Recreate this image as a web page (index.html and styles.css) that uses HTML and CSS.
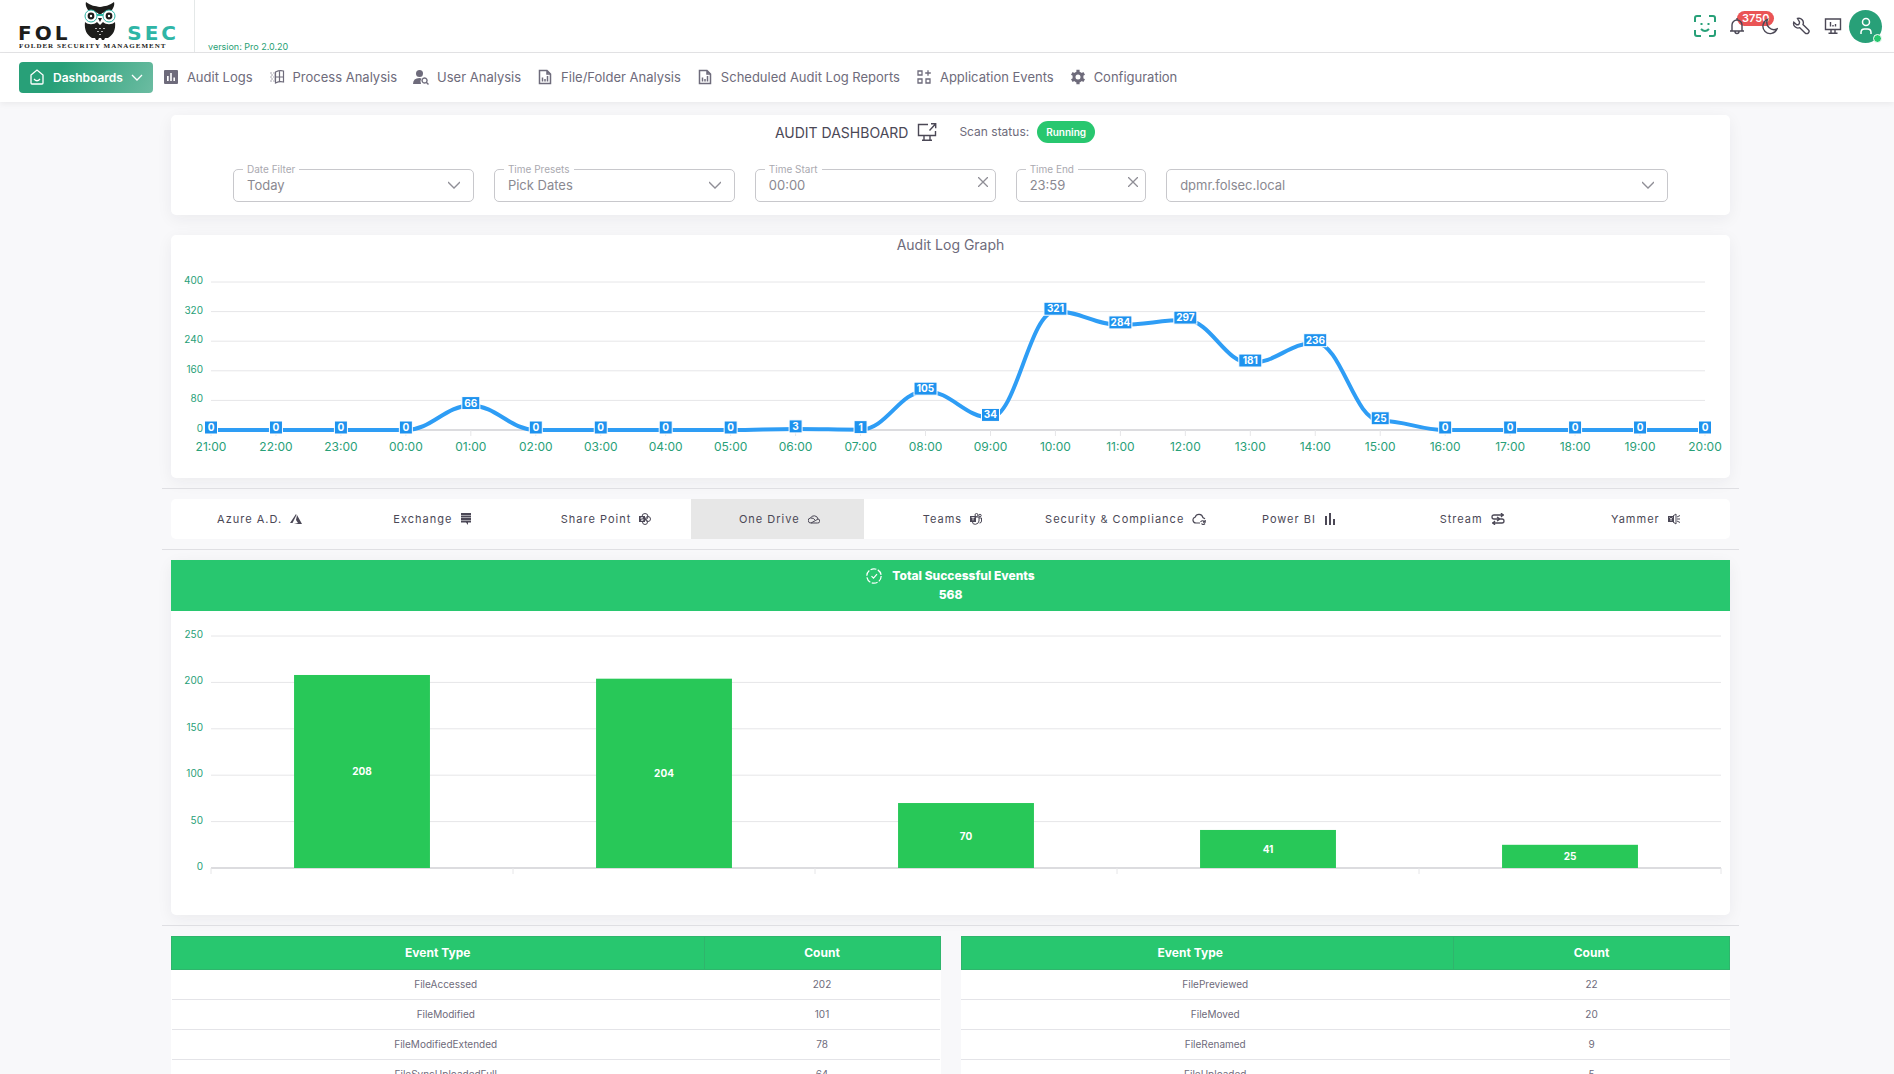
FILE: index.html
```
<!DOCTYPE html>
<html lang="en">

<head>
    <meta charset="UTF-8">
    <meta name="viewport" content="width=device-width, initial-scale=1.0">
    <title>Audit Dashboard</title>
    <link rel="stylesheet" href="styles.css">
</head>

<body>
    <header class="topbar">
        <a href="#" class="brand" aria-label="Folsec">
            <svg width="160" height="50" viewBox="0 0 160 50">
                <text class="logo-word" x="-1" y="40">FOL</text>
                <text class="logo-word logo-teal" x="160" y="40" text-anchor="end">SEC</text>
                <text class="logo-tag" x="0" y="48">FOLDER SECURITY MANAGEMENT</text>
                <path d="M67 2c5 4 9 4 14 5 5-1 9-1 14-5 1 3-1 7-3 9-4 0-8 1-11 4-3-3-7-4-11-4-2-2-4-6-3-9z" fill="#1d1d1b"/>
                <path d="M66 22c3 3 9 3 12 0l3 3 3-3c3 3 9 3 12 0 1 8-2 13-7 16h-3l-1 2h-2l-1-2h-2l-1 2h-2l-1-2h-3c-5-3-8-8-7-16z" fill="#1d1d1b"/>
                <circle cx="72" cy="16" r="6" fill="#fff" stroke="#2fb5a6"/>
                <circle cx="90" cy="16" r="6" fill="#fff" stroke="#2fb5a6"/>
                <path d="M78 15h6" stroke="#2fb5a6" stroke-width="2"/>
                <path d="M79 18h4l-2 4z" fill="#1d1d1b"/>
                <circle cx="72" cy="16" r="3.4" fill="#1d1d1b"/>
                <circle cx="90" cy="16" r="3.4" fill="#1d1d1b"/>
                <circle cx="72" cy="16" r="1.2" fill="#fff"/>
                <circle cx="90" cy="16" r="1.2" fill="#fff"/>
                <path d="M76 28l1 1 1-1M80 28l1 1 1-1M84 28l1 1 1-1M78 31l1 1 1-1M82 31l1 1 1-1M80 34l1 1 1-1" fill="none" stroke="#fff" stroke-width=".7"/>
            </svg>
        </a>
        <span class="version">version: Pro 2.0.20</span>
        <div class="actions">
            <button class="action action-face" aria-label="Account status">
                <svg width="22" height="22" viewBox="0 0 22 22" fill="none" stroke="currentColor" stroke-width="2">
                    <path d="M1 7V3q0-2 2-2h4M15 1h4q2 0 2 2v4M21 15v4q0 2-2 2h-4M7 21H3q-2 0-2-2v-4M7 14q4 4 8 0"/>
                    <path d="M6.500 9h2M13.500 9h2"/>
                </svg>
            </button>
            <button class="action" aria-label="Notifications">
                <svg class="icon-line" width="16" height="18" viewBox="0 0 16 18">
                    <path d="M1 14h14M3 14V8a5 5 0 0 1 10 0v6M6 14.500q0 2 2 2t2-2M8 3V1"/>
                </svg>
                <span class="badge">3750</span>
            </button>
            <button class="action" aria-label="Dark mode">
                <svg class="icon-line" width="17" height="17" viewBox="0 0 17 17">
                    <path d="M6.500 1.500A7.300 7.300 0 1 0 16 11 7.200 7.200 0 0 1 6.500 1.500z"/>
                </svg>
            </button>
            <button class="action" aria-label="Tools">
                <svg class="icon-line" width="18" height="18" viewBox="0 0 18 18">
                    <path d="M5.500 1.500a4.500 4.500 0 0 1 5.500 6l5.300 5.200a2.200 2.200 0 0 1-3.200 3.300L7.800 10.700a4.500 4.500 0 0 1-6-5.500l2.900 2.600q3 .2 2.800-2.900z"/>
                </svg>
            </button>
            <button class="action" aria-label="Monitor">
                <svg class="icon-line" width="18" height="18" viewBox="0 0 18 18">
                    <path d="M1.500 2h15v10.500h-15zM7 13v3M11 13v3M4.500 16.200h9M6.500 5v4.500M9 8v1.500M11.500 7v2.500"/>
                </svg>
            </button>
            <button class="avatar" aria-label="Profile">
                <svg width="16" height="18" viewBox="0 0 16 18" fill="none" stroke="#fff" stroke-width="1.5">
                    <circle cx="8" cy="5" r="3.500"/>
                    <path d="M3 17v-1.500q0-3.500 3.500-3.500h3q3.500 0 3.500 3.500V17"/>
                </svg>
                <span class="online"></span>
            </button>
        </div>
    </header>

    <nav class="menu">
        <a href="#" class="menu-item active">
            <svg width="16" height="16" viewBox="0 0 16 16" fill="none" stroke="currentColor" stroke-width="1.300">
                <path d="M2 6l6-5 6 5v8q0 1-1 1H3q-1 0-1-1zM5 10q3 3.500 6 0"/>
            </svg>
            Dashboards
            <svg width="12" height="12" viewBox="0 0 12 12" fill="none" stroke="currentColor" stroke-width="1.300">
                <path d="M1 4l5 5 5-5"/>
            </svg>
        </a>
        <a href="#" class="menu-item">
            <svg width="16" height="16" viewBox="0 0 16 16" fill="currentColor">
                <path fill-rule="evenodd" d="M2 1h12q1 0 1 1v12q0 1-1 1H2q-1 0-1-1V2q0-1 1-1zM4 7v5h1.700V7zM7.200 4v8h1.600V4zM10.400 8.500V12H12V8.500z"/>
            </svg>
            Audit Logs
        </a>
        <a href="#" class="menu-item">
            <svg width="16" height="16" viewBox="0 0 16 16" fill="none" stroke="currentColor" stroke-width="1.200">
                <path d="M6.500 3q4-2 8-1v11q-4-1-8 1zM10.500 2v11M6.500 8h8"/>
                <path d="M1 4h5M2 6h4M1 8h5M2 10h4M1 12h5" stroke-width="1" stroke-opacity=".6" stroke-dasharray="2 1"/>
            </svg>
            Process Analysis
        </a>
        <a href="#" class="menu-item">
            <svg width="16" height="16" viewBox="0 0 16 16" fill="currentColor">
                <circle cx="6.500" cy="4.500" r="3.500"/>
                <path d="M0 15q0-6 6.500-6l2 .4q-2 2.600-.5 5.600z"/>
                <path d="M11.500 9a2.500 2.500 0 1 0 .1 0zM13.300 13.300l2.200 2.200" fill="none" stroke="currentColor" stroke-width="1.400"/>
            </svg>
            User Analysis
        </a>
        <a href="#" class="menu-item">
            <svg width="16" height="16" viewBox="0 0 16 16" fill="none" stroke="currentColor" stroke-width="1.500">
                <path d="M3 1.500h7l3.500 3.500v9.500h-11v-13zM10 1.500V5h3.500M5.500 8.500v4M8 10v2.500M10.500 7v5.500"/>
            </svg>
            File/Folder Analysis
        </a>
        <a href="#" class="menu-item">
            <svg width="16" height="16" viewBox="0 0 16 16" fill="none" stroke="currentColor" stroke-width="1.500">
                <path d="M3 1.500h7l3.500 3.500v9.500h-11v-13zM10 1.500V5h3.500M5.500 8.500v4M8 10v2.500M10.500 7v5.500"/>
            </svg>
            Scheduled Audit Log Reports
        </a>
        <a href="#" class="menu-item">
            <svg width="16" height="16" viewBox="0 0 16 16" fill="none" stroke="currentColor" stroke-width="1.300">
                <path d="M2 2h4v4H2zM2 10h4v4H2zM10 10h4v4h-4zM12 1.200v5.600M9.200 4h5.600"/>
            </svg>
            Application Events
        </a>
        <a href="#" class="menu-item">
            <svg width="16" height="16" viewBox="0 0 16 16">
                <circle cx="8" cy="8" r="4" fill="none" stroke="currentColor" stroke-width="3"/>
                <path d="M8 .8v3M8 12.200v3M1.800 4.400l2.600 1.500M11.600 10.100l2.600 1.500M1.800 11.600l2.600-1.500M11.600 5.900l2.600-1.500" stroke="currentColor" stroke-width="3.200"/>
            </svg>
            Configuration
        </a>
    </nav>

    <main class="content">
        <section class="card filters">
            <div class="title-row">
                <h1>AUDIT DASHBOARD</h1>
                <svg class="icon-line" width="20" height="20" viewBox="0 0 20 20">
                    <path d="M11 2.500H1.500v11h17V9M7 14v4M13 14v4M5 18.200h10M12.500 8.500L18.500 2M14 1.700h4.700v4.600"/>
                </svg>
                <span class="scan">Scan status:</span>
                <span class="status">Running</span>
            </div>
            <form class="filter-row">
                <div class="field">
                    <label for="date-filter">Date Filter</label>
                    <select id="date-filter">
                        <option>Today</option>
                    </select>
                    <svg class="arrow" width="12" height="12" viewBox="0 0 12 12"><path d="M0 3l6 6 6-6"/></svg>
                </div>
                <div class="field">
                    <label for="time-presets">Time Presets</label>
                    <select id="time-presets">
                        <option>Pick Dates</option>
                    </select>
                    <svg class="arrow" width="12" height="12" viewBox="0 0 12 12"><path d="M0 3l6 6 6-6"/></svg>
                </div>
                <div class="field">
                    <label for="time-start">Time Start</label>
                    <input type="text" id="time-start" value="00:00">
                    <button type="button" class="clear" aria-label="Clear start">
                        <svg width="10" height="10" viewBox="0 0 10 10"><path d="M0 0l10 10M10 0L0 10"/></svg>
                    </button>
                </div>
                <div class="field">
                    <label for="time-end">Time End</label>
                    <input type="text" id="time-end" value="23:59">
                    <button type="button" class="clear" aria-label="Clear end">
                        <svg width="10" height="10" viewBox="0 0 10 10"><path d="M0 0l10 10M10 0L0 10"/></svg>
                    </button>
                </div>
                <div class="field">
                    <select id="server" aria-label="Server">
                        <option>dpmr.folsec.local</option>
                    </select>
                    <svg class="arrow" width="12" height="12" viewBox="0 0 12 12"><path d="M0 3l6 6 6-6"/></svg>
                </div>
            </form>
        </section>

        <section class="card">
            <h2>Audit Log Graph</h2>
            <svg class="chart" id="line-chart" viewBox="0 0 1559 218"></svg>
        </section>

        <hr>

        <div class="tabs">
            <button class="tab">Azure A.D.
                <svg width="12" height="12" viewBox="0 0 12 12" fill="currentColor"><path d="M6 1L0 10h2.500L6.500 2zM7 2l5 9H4l4-1-2-3z"/></svg>
            </button>
            <button class="tab">Exchange
                <svg width="12" height="12" viewBox="0 0 12 12" fill="currentColor"><path d="M1 0h10v2H1zM1 2.500h10v2H1zM1 5h10v2H1zM1 7.500h10v2H8V12L6 9.500H1z"/></svg>
            </button>
            <button class="tab">Share Point
                <svg width="12" height="12" viewBox="0 0 12 12" fill="none" stroke="currentColor"><circle cx="6" cy="3.500" r="3"/><circle cx="9" cy="6" r="2.500"/><circle cx="6" cy="9" r="2.500"/><path d="M0 3h6v6H0z" fill="currentColor" stroke="none"/><path d="M4 4.500H2v1.500h2v1.500H2" stroke="#fff" stroke-width=".7"/></svg>
            </button>
            <button class="tab selected">One Drive
                <svg width="12" height="12" viewBox="0 0 12 12" fill="none" stroke="currentColor"><path d="M3 10h6.500a2 2 0 0 0 .5-4A4 4 0 0 0 2.500 5 2.500 2.500 0 0 0 3 10zM2.500 5q3-.5 5 2.500L10 6M3 10l4.500-2.500"/></svg>
            </button>
            <button class="tab">Teams
                <svg width="12" height="12" viewBox="0 0 12 12" fill="none" stroke="currentColor"><circle cx="6.500" cy="2" r="1.500"/><circle cx="10" cy="2.500" r="1.200"/><path d="M6 4h3v4q-.5 3-3.500 3.300T2.500 9M9 5h2.500v3q0 2-2 2"/><path d="M0 3h6v6H0z" fill="currentColor" stroke="none"/><path d="M1.500 4.500h3M3 4.500v3" stroke="#fff" stroke-width=".8"/></svg>
            </button>
            <button class="tab">Security &amp; Compliance
                <svg width="14" height="12" viewBox="0 0 14 12" fill="none" stroke="currentColor" stroke-width="1.200"><path d="M8 10H4a3 3 0 0 1-.8-5.900 4 4 0 0 1 7.700.5q1.400.4 2 1.400"/><path d="M8.500 9q2-2.500 4.500 0M13.200 7v2.200H11M13 10.500q-2 2-3.500 0"/></svg>
            </button>
            <button class="tab">Power BI
                <svg width="12" height="12" viewBox="0 0 12 12" fill="currentColor"><path d="M1 3h2v9H1zM5 0h2v12H5zM9 6h2v6H9z"/></svg>
            </button>
            <button class="tab">Stream
                <svg width="14" height="12" viewBox="0 0 14 12" fill="none" stroke="currentColor" stroke-width="1.300"><path d="M13 2H3Q1 2 1 4t2 2h8q2 0 2 2t-2 2H1M10 0l2 2-2 2M4 8l-2 2 2 2M6 4l3 2-3 2"/></svg>
            </button>
            <button class="tab">Yammer
                <svg width="12" height="12" viewBox="0 0 12 12" fill="none" stroke="currentColor"><path d="M5 3l3-2v10L5 9M9 4l3-1.500M9 6h3M9 8l3 1.500"/><path d="M0 3h6v6H0z" fill="currentColor" stroke="none"/><path d="M1.500 4.500L3 6l1.500-1.500M3 6v2" stroke="#fff" stroke-width=".8"/></svg>
            </button>
        </div>

        <hr>

        <section class="card">
            <div class="total">
                <div class="total-title">
                    <svg width="16" height="16" viewBox="0 0 16 16" fill="none" stroke="currentColor" stroke-width="1.200">
                        <circle cx="8" cy="8" r="7.200" stroke-dasharray="6 1.540"/>
                        <path d="M5.500 8.200l2 2 3.500-4"/>
                    </svg>
                    Total Successful Events
                </div>
                <div>568</div>
            </div>
            <svg class="chart" id="bar-chart" viewBox="0 0 1559 304"></svg>
        </section>

        <hr>

        <div class="tables">
            <table class="events">
                <thead>
                    <tr><th>Event Type</th><th class="count">Count</th></tr>
                </thead>
                <tbody>
                    <tr><td>FileAccessed</td><td>202</td></tr>
                    <tr><td>FileModified</td><td>101</td></tr>
                    <tr><td>FileModifiedExtended</td><td>78</td></tr>
                    <tr><td>FileSyncUploadedFull</td><td>64</td></tr>
                </tbody>
            </table>
            <table class="events">
                <thead>
                    <tr><th class="type-wide">Event Type</th><th class="count wide">Count</th></tr>
                </thead>
                <tbody>
                    <tr><td>FilePreviewed</td><td>22</td></tr>
                    <tr><td>FileMoved</td><td>20</td></tr>
                    <tr><td>FileRenamed</td><td>9</td></tr>
                    <tr><td>FileUploaded</td><td>5</td></tr>
                </tbody>
            </table>
        </div>
    </main>

    <script>
        function add(svg, tag, attrs, text) {
            const el = document.createElementNS('http://www.w3.org/2000/svg', tag);
            for (const name in attrs) {
                el.setAttribute(name, attrs[name]);
            }
            if (text !== undefined) {
                el.textContent = text;
            }
            svg.appendChild(el);
            return el;
        }

        // horizontal lines with their values on the left
        function drawGrid(svg, left, right, top, bottom, max, step) {
            for (let v = 0; v <= max; v += step) {
                const y = bottom - (bottom - top) * v / max;
                add(svg, 'line', { class: v === 0 ? 'axis' : 'grid', x1: left, x2: right, y1: y, y2: y });
                add(svg, 'text', { class: 'y-label', x: left - 8, y: y + 2 }, v);
            }
        }

        function drawLineChart() {
            const svg = document.getElementById('line-chart');
            const values = [0, 0, 0, 0, 66, 0, 0, 0, 0, 3, 1, 105, 34, 321, 284, 297, 181, 236, 25, 0, 0, 0, 0, 0];
            const left = 40, right = 1534, top = 22, bottom = 170;
            const dx = (right - left) / (values.length - 1);

            drawGrid(svg, left, right, top, bottom, 400, 80);

            const points = values.map((v, i) => ({ x: left + dx * i, y: bottom - (bottom - top) * v / 400 }));
            let d = `M${points[0].x} ${points[0].y}`;
            points.forEach((p, i) => {
                add(svg, 'line', { class: 'grid', x1: p.x, x2: p.x, y1: bottom, y2: bottom + 6 });
                const hour = String((21 + i) % 24).padStart(2, '0');
                add(svg, 'text', { class: 'x-label', x: p.x, y: bottom + 21 }, hour + ':00');
                if (i > 0) {
                    const prev = points[i - 1];
                    const c = dx * 0.4;
                    d += ` C${prev.x + c} ${prev.y} ${p.x - c} ${p.y} ${p.x} ${p.y}`;
                }
            });
            add(svg, 'path', { class: 'series', d: d });

            points.forEach((p, i) => {
                const w = 8 + String(values[i]).length * 5;
                add(svg, 'rect', { class: 'tag', x: p.x - w / 2, y: p.y - 9, width: w, height: 13 });
                add(svg, 'text', { class: 'value', x: p.x, y: p.y + 1 }, values[i]);
            });
        }

        function drawBarChart() {
            const svg = document.getElementById('bar-chart');
            const values = [208, 204, 70, 41, 25];
            const left = 40, right = 1550, top = 25, bottom = 257;
            const dx = (right - left) / values.length;

            drawGrid(svg, left, right, top, bottom, 250, 50);

            for (let i = 0; i <= values.length; i++) {
                add(svg, 'line', { class: 'grid', x1: left + dx * i, x2: left + dx * i, y1: bottom, y2: bottom + 6 });
            }

            values.forEach((v, i) => {
                const h = (bottom - top) * v / 250;
                const w = dx * 0.45;
                const mid = left + dx * (i + 0.5);
                add(svg, 'rect', { class: 'bar', x: mid - w / 2, y: bottom - h, width: w, height: h });
                add(svg, 'text', { class: 'value', x: mid, y: bottom - h / 2 + 4 }, v);
            });
        }

        drawLineChart();
        drawBarChart();
    </script>
</body>

</html>
```
FILE: styles.css
```
* {
    box-sizing: border-box;
}

body {
    margin: 0;
    font-family: Inter, "Open Sans", sans-serif;
    font-size: 13px;
    color: #6e6b7b;
    background-color: #f8f8fa;
}

button {
    font-family: inherit;
    border: none;
    background: none;
    padding: 0;
    cursor: pointer;
}

svg {
    flex-shrink: 0;
}

.icon-line {
    fill: none;
    stroke: #4b4856;
    stroke-width: 1.4;
}

/* top bar */
.topbar {
    display: flex;
    height: 53px;
    padding: 0 12px 0 19px;
    background-color: #fff;
    border-bottom: 1px solid #e4e4e6;
}

.brand {
    padding-right: 15px;
    border-right: 1px solid #e4e8e8;
}

.brand svg {
    display: block;
}

.logo-word {
    font-family: "DejaVu Sans", sans-serif;
    font-size: 20px;
    font-weight: bold;
    letter-spacing: 3px;
    fill: #1d1d1b;
}

.logo-teal {
    fill: #2fb5a6;
}

.logo-tag {
    font-family: "Liberation Serif", serif;
    font-size: 7px;
    font-weight: bold;
    letter-spacing: 1px;
    fill: #1d1d1b;
}

.version {
    align-self: flex-end;
    margin-left: 13px;
    font-size: 9px;
    line-height: 10px;
    color: #28a074;
}

.actions {
    display: flex;
    align-items: center;
    margin-left: auto;
}

.action {
    position: relative;
    display: flex;
    align-items: center;
    justify-content: center;
    width: 32px;
    height: 32px;
}

.action svg {
    position: relative;
    z-index: 1;
}

.action-face {
    color: #28a078;
}

.badge {
    position: absolute;
    top: 1px;
    left: 16px;
    padding: 0 5px;
    border-radius: 8px;
    background-color: #ea5455;
    color: #fff;
    font-size: 11px;
    font-weight: 600;
    line-height: 15px;
}

.avatar {
    position: relative;
    display: flex;
    align-items: center;
    justify-content: center;
    width: 33px;
    height: 33px;
    border-radius: 50%;
    background-color: #28a078;
}

.online {
    position: absolute;
    right: 0;
    bottom: 0;
    width: 9px;
    height: 9px;
    border: 1px solid #fff;
    border-radius: 50%;
    background-color: #28c76f;
}

/* menu */
.menu {
    display: flex;
    align-items: center;
    gap: 16px;
    height: 49px;
    padding: 0 19px 1px;
    background-color: #fff;
    box-shadow: 0 2px 6px rgba(0, 0, 0, 0.06);
}

.menu-item {
    display: flex;
    align-items: center;
    gap: 8px;
    color: #6e6b7b;
    text-decoration: none;
    white-space: nowrap;
}

.menu-item.active {
    height: 31px;
    margin-right: -6px;
    padding: 0 10px;
    border-radius: 4px;
    background: linear-gradient(118deg, #28a078 30%, #6cbca2);
    color: #fff;
    font-size: 12px;
    font-weight: 600;
}

/* content */
.content {
    padding: 13px 155px 0 162px;
}

.card {
    margin: 0 9px 20px;
    border-radius: 5px;
    background-color: #fff;
    box-shadow: 0 4px 16px rgba(34, 41, 47, 0.06);
}

hr {
    height: 1px;
    margin: 10px 0;
    border: none;
    background-color: #dfdfe3;
}

.card + hr {
    margin-top: -10px;
}

h1,
h2 {
    margin: 0;
    font-weight: 400;
}

h1 {
    font-size: 14px;
    color: #4b4856;
}

h2 {
    padding-top: 1px;
    font-size: 14px;
    line-height: 18px;
    margin-bottom: 6px;
    text-align: center;
}

.filters {
    padding: 6px 62px 13px;
}

.title-row {
    display: flex;
    align-items: center;
    justify-content: center;
    height: 22px;
    padding-right: 31px;
}

.title-row .icon-line {
    margin-left: 9px;
}

.scan {
    margin: 0 8px 0 22px;
    padding-bottom: 2px;
    font-size: 12px;
}

.status {
    padding: 0 9px;
    border-radius: 11px;
    background-color: #28c76f;
    color: #fff;
    font-size: 10px;
    font-weight: 600;
    line-height: 22px;
}

.filter-row {
    display: grid;
    grid-template-columns: 24fr 24fr 24fr 13fr 50fr;
    gap: 20px;
    margin-top: 26px;
}

.field {
    position: relative;
    display: flex;
    align-items: center;
    min-width: 0;
    height: 33px;
    padding: 0 13px 2px;
    border: 1px solid #c8c8cc;
    border-radius: 5px;
}

.field label {
    position: absolute;
    top: -7px;
    left: 9px;
    padding: 0 4px;
    background-color: #fff;
    font-size: 10px;
    line-height: 12px;
    color: #aaa9b0;
}

.field select,
.field input {
    flex: 1;
    width: 100%;
    min-width: 0;
    padding: 0;
    border: none;
    outline: none;
    background: none;
    appearance: none;
    font-family: inherit;
    font-size: 13px;
    line-height: 18px;
    color: #8a8991;
}

.field svg {
    fill: none;
    stroke: #8f8e96;
    stroke-width: 1.3;
}

.clear {
    display: flex;
    align-self: flex-start;
    margin: 7px -6px 0 0;
}

/* charts */
.chart {
    display: block;
    width: 100%;
}

.grid {
    stroke: #e6e6e8;
}

.axis {
    stroke: #dcdcdf;
    stroke-width: 2;
}

.y-label {
    font-size: 10px;
    fill: #28a078;
    text-anchor: end;
}

.x-label {
    font-size: 12px;
    fill: #28a078;
    text-anchor: middle;
}

.series {
    fill: none;
    stroke: #2e9df5;
    stroke-width: 4;
}

.tag {
    fill: #1e92ee;
    stroke: #fff;
}

.value {
    font-size: 10px;
    font-weight: 700;
    fill: #fff;
    text-anchor: middle;
}

.bar {
    fill: #28c858;
}

/* tabs */
.tabs {
    display: flex;
    margin: 0 9px;
    border-radius: 5px;
    background-color: #fff;
    overflow: hidden;
}

.tab {
    display: flex;
    flex: 1 1 0;
    align-items: center;
    justify-content: center;
    gap: 8px;
    height: 40px;
    padding-left: 4px;
    color: #4b4856;
    font-size: 11px;
    letter-spacing: 1px;
    white-space: nowrap;
}

.tab.selected {
    background-color: #e7e7e7;
}

.total {
    padding: 6px 0 7px;
    background-color: #28c76f;
    color: #fff;
    font-size: 12px;
    font-weight: 800;
    line-height: 19px;
    text-align: center;
}

.total-title {
    display: flex;
    align-items: center;
    justify-content: center;
    gap: 10px;
}

/* tables */
.tables {
    display: grid;
    grid-template-columns: 1fr 1fr;
    gap: 20px;
    margin: 0 9px;
}

.events {
    width: 100%;
    border-collapse: collapse;
    table-layout: fixed;
    background-color: #fff;
    text-align: center;
}

.events th {
    height: 33px;
    padding: 0 0 2px;
    border: 1px solid #2fb56c;
    background-color: #28c76f;
    color: #fff;
    font-size: 12px;
    font-weight: 700;
}

.events .type-wide {
    padding-right: 34px;
}

.events .count {
    width: 236px;
}

.events .count.wide {
    width: 276px;
}

.events td {
    height: 30px;
    padding: 0 0 2px;
    border-bottom: 1px solid #e4e4e8;
    font-size: 10px;
}

.events td:first-child {
    padding-left: 16px;
}
```
